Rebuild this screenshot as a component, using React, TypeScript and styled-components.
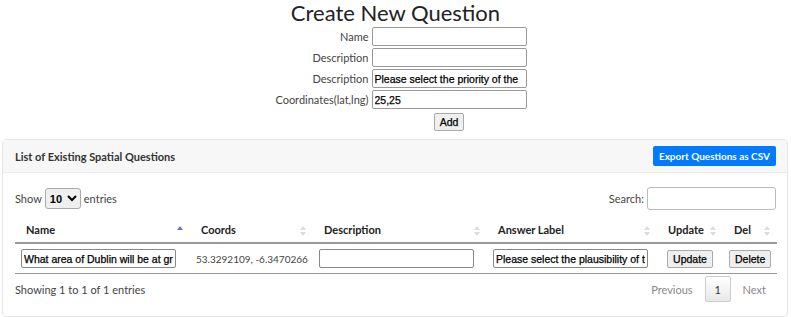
import styled, { createGlobalStyle } from 'styled-components';

const GlobalStyle = createGlobalStyle`
  body {
    margin: 0;
    background: #fff;
    font-family: 'Lato', 'Noto Sans', sans-serif;
    color: #212529;
  }
`;

const columns = [
  { label: 'Name', width: 175, active: true },
  { label: 'Coords', width: 123 },
  { label: 'Description', width: 174 },
  { label: 'Answer Label', width: 170 },
  { label: 'Update', width: 66 },
  { label: 'Del', width: 54 },
];

export default function App() {
  return (
    <>
      <GlobalStyle />
      <Page>
        <Title>Create New Question</Title>
        <Form>
          <Label>Name</Label>
          <TextInput />
          <Label>Description</Label>
          <TextInput />
          <Label>Description</Label>
          <TextInput defaultValue='Please select the priority of the' />
          <Label>Coordinates(lat,lng)</Label>
          <TextInput defaultValue='25,25' />
          <span />
          <AddRow>
            <PlainButton>Add</PlainButton>
          </AddRow>
        </Form>

        <Card>
          <CardHeader>
            <p>List of Existing Spatial Questions</p>
            <ExportButton>Export Questions as CSV</ExportButton>
          </CardHeader>
          <CardBody>
            <Controls>
              <div className='length'>
                Show
                <Select defaultValue='10'>
                  <option>10</option>
                  <option>25</option>
                  <option>50</option>
                </Select>
                entries
              </div>
              <div className='search'>
                Search:
                <SearchInput />
              </div>
            </Controls>

            <Table>
              <colgroup>
                {columns.map((c) => (
                  <col key={c.label} style={{ width: c.width }} />
                ))}
              </colgroup>
              <thead>
                <tr>
                  {columns.map((c) => (
                    <Th key={c.label}>
                      {c.label}
                      <SortIcon active={!!c.active} />
                    </Th>
                  ))}
                </tr>
              </thead>
              <tbody>
                <tr>
                  <Td>
                    <CellInput defaultValue='What area of Dublin will be at greatest risk' />
                  </Td>
                  <Td>53.3292109, -6.3470266</Td>
                  <Td>
                    <CellInput />
                  </Td>
                  <Td>
                    <CellInput defaultValue='Please select the plausibility of the' />
                  </Td>
                  <Td center>
                    <PlainButton>Update</PlainButton>
                  </Td>
                  <Td center>
                    <PlainButton>Delete</PlainButton>
                  </Td>
                </tr>
              </tbody>
            </Table>

            <Footer>
              <span>Showing 1 to 1 of 1 entries</span>
              <Pager>
                <span>Previous</span>
                <PageBox>1</PageBox>
                <span>Next</span>
              </Pager>
            </Footer>
          </CardBody>
        </Card>
      </Page>
    </>
  );
}

function SortIcon({ active }: { active: boolean }) {
  return (
    <svg className='sort' width='6' height='10' viewBox='0 0 6 10'>
      <path d='M3 0 L6 4 L0 4 Z' fill={active ? '#6c6fd6' : '#dcdcdc'} />
      {!active && <path d='M3 10 L6 6 L0 6 Z' fill='#dcdcdc' />}
    </svg>
  );
}

const Page = styled.div`
  display: flex;
  flex-direction: column;
  align-items: center;
`;

const Title = styled.h1`
  margin: 0;
  font-size: 22px;
  font-weight: 400;
  line-height: 25px;
  color: #222;
`;

const Form = styled.div`
  display: grid;
  grid-template-columns: 120px 155px;
  column-gap: 3px;
  row-gap: 2px;
  align-items: center;
  margin-top: 2px;
  margin-right: 16px;
`;

const Label = styled.label`
  justify-self: end;
  font-size: 11px;
  color: #444;
`;

const TextInput = styled.input`
  box-sizing: border-box;
  width: 155px;
  height: 19px;
  padding: 1px 2px;
  border: 1px solid #999;
  border-radius: 2px;
  font-family: 'Liberation Sans', sans-serif;
  font-size: 10.5px;
  color: #000;
  -webkit-text-stroke: 0.25px #000;
`;

const AddRow = styled.div`
  display: flex;
  justify-content: center;
  padding-top: 2px;
`;

const PlainButton = styled.button`
  padding: 2px 5px;
  border: 1px solid #aaa;
  border-radius: 2px;
  background: #efefef;
  font-family: 'Liberation Sans', sans-serif;
  font-size: 10.5px;
  color: #000;
  -webkit-text-stroke: 0.25px #000;
`;

const Card = styled.div`
  align-self: stretch;
  margin: 8px 3px 0 2px;
  border: 1px solid #e6e6e6;
  border-radius: 4px;
`;

const CardHeader = styled.div`
  display: flex;
  justify-content: space-between;
  align-items: center;
  height: 32px;
  padding: 0 11px 0 12px;
  background: #f7f7f7;
  border-bottom: 1px solid #ececec;

  p {
    margin: 0;
    font-size: 11px;
    font-weight: 700;
    color: #333;
  }
`;

const ExportButton = styled.button`
  height: 20px;
  padding: 0 6px;
  border: none;
  border-radius: 2px;
  background: #007bff;
  color: #fff;
  font-family: 'Lato', sans-serif;
  font-size: 10px;
  font-weight: 700;
`;

const CardBody = styled.div`
  padding: 14px 11px 14px 12px;
`;

const Controls = styled.div`
  display: flex;
  justify-content: space-between;
  align-items: center;
  font-size: 11px;
  color: #444;

  .length,
  .search {
    display: flex;
    align-items: center;
    gap: 3px;
  }
`;

const Select = styled.select`
  width: 36px;
  height: 21px;
  border: 1px solid #aaa;
  border-radius: 3px;
  font-family: 'Liberation Sans', sans-serif;
  font-size: 11px;
  font-weight: 700;
`;

const SearchInput = styled.input`
  box-sizing: border-box;
  width: 129px;
  height: 23px;
  border: 1px solid #bbb;
  border-radius: 3px;
`;

const Table = styled.table`
  width: 100%;
  margin-top: 8px;
  table-layout: fixed;
  border-collapse: collapse;
`;

const Th = styled.th`
  position: relative;
  padding: 5px 10px 6px 11px;
  text-align: left;
  font-size: 11px;
  font-weight: 700;
  color: #222;
  border-bottom: 2px solid #999;

  .sort {
    position: absolute;
    right: 7px;
    top: 8px;
  }
`;

const Td = styled.td<{ center?: boolean }>`
  height: 29px;
  padding: 0 6px;
  white-space: nowrap;
  overflow: hidden;
  text-align: ${(p) => (p.center ? 'center' : 'left')};
  font-size: 10px;
  color: #444;
  border-bottom: 1px solid #999;
`;

const CellInput = styled(TextInput)`
  border-color: #888;
`;

const Footer = styled.div`
  display: flex;
  justify-content: space-between;
  align-items: center;
  margin-top: 2px;
  font-size: 11px;
  color: #444;
`;

const Pager = styled.div`
  display: flex;
  align-items: center;
  gap: 12px;
  padding-right: 10px;
  color: #888;
`;

const PageBox = styled.span`
  display: flex;
  align-items: center;
  justify-content: center;
  width: 24px;
  height: 24px;
  border: 1px solid #ccc;
  border-radius: 2px;
  background: linear-gradient(#fff, #e8e8e8);
  color: #333;
`;
